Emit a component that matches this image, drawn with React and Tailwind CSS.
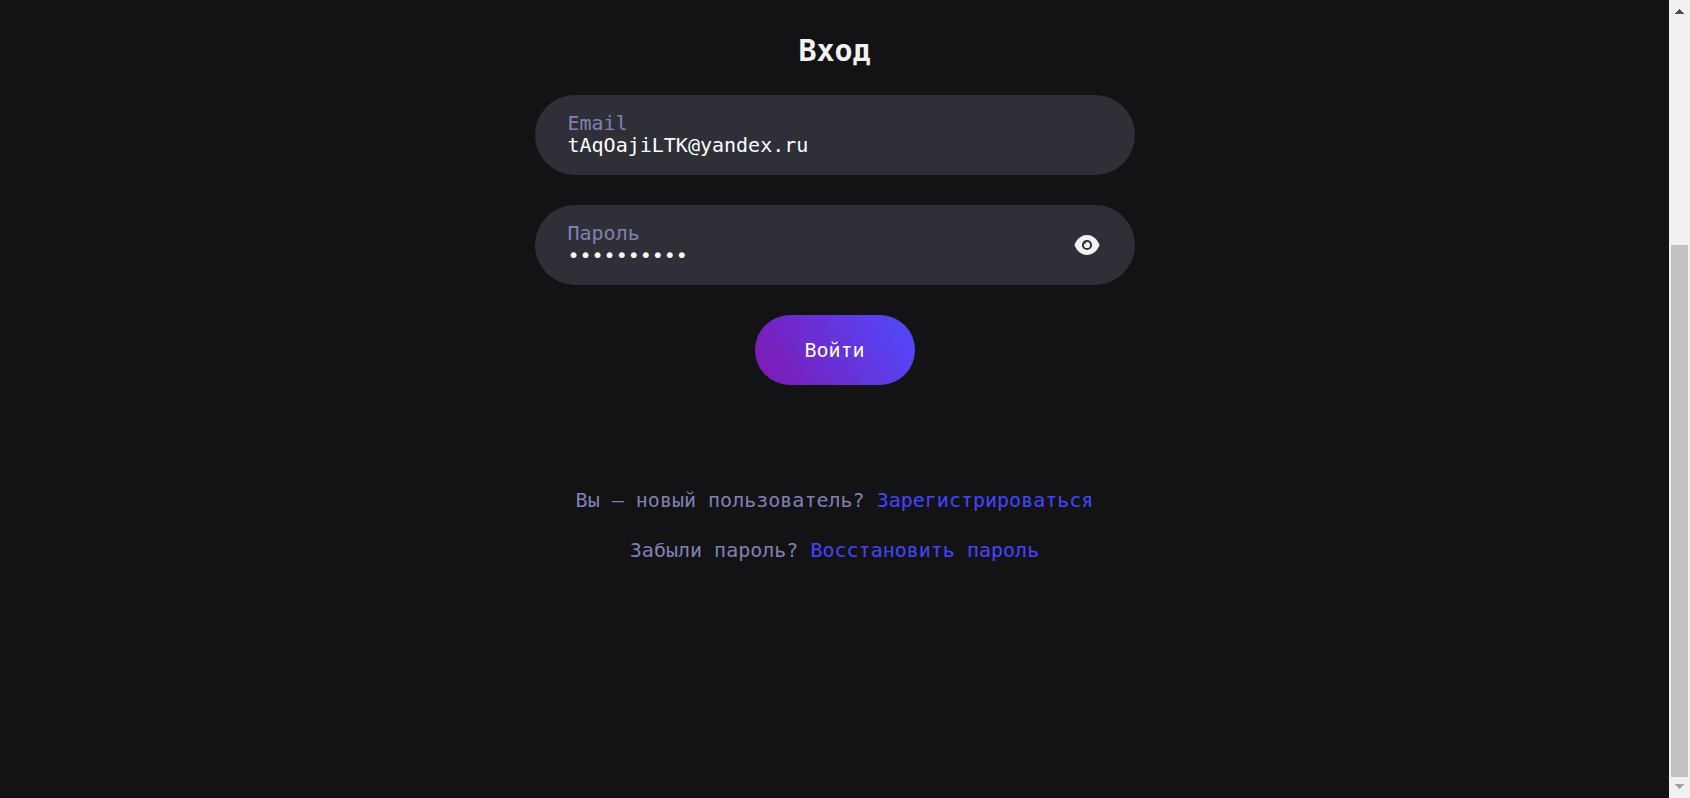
import { useState } from "react";

function Field({ id, label, children, action }) {
  return (
    <div className="flex h-20 items-center rounded-full bg-[#2f2f37] pr-[35px] pl-[33px]">
      <div className="flex min-w-0 flex-1 flex-col pb-0.5">
        <label htmlFor={id} className="leading-[22px] text-[#8181b1]">
          {label}
        </label>
        {children}
      </div>
      {action}
    </div>
  );
}

function EyeIcon() {
  return (
    <svg viewBox="0 0 26 20" className="h-5 w-[26px]" aria-hidden="true">
      <path
        fill="#f2f2f2"
        fillRule="evenodd"
        d="M13 0C7.6 0 3.4 3.4.7 9.2a1.9 1.9 0 0 0 0 1.6C3.4 16.6 7.6 20 13 20s9.6-3.4 12.300-9.200a1.900 1.900 0 0 0 0-1.600C22.600 3.400 18.400 0 13 0ZM13 4.900a5.100 5.100 0 1 1 0 10.200 5.100 5.100 0 0 1 0-10.200Z"
      />
      <circle cx="13" cy="10" r="3.1" fill="#f2f2f2" />
      <circle cx="11.2" cy="7.9" r="0.9" fill="#2f2f37" />
    </svg>
  );
}

function ScrollRail() {
  return (
    <div className="flex w-[21px] shrink-0 flex-col items-center bg-[#f1f1f1]" aria-hidden="true">
      <svg viewBox="0 0 9 5" className="mt-[9px] h-[5px] w-[9px]" shapeRendering="crispEdges">
        <path fill="#505050" d="M4 0h1v1h1v1h1v1h1v1h1v1H0V4h1V3h1V2h1V1h1z" />
      </svg>
      <div className="grow-[231]" />
      <div className="w-[17px] grow-[532] bg-[#c1c1c1]" />
      <svg viewBox="0 0 9 5" className="mt-[7px] mb-[9px] h-[5px] w-[9px]" shapeRendering="crispEdges">
        <path fill="#a3a3a3" d="M0 0h9v1H8v1H7v1H6v1H5v1H4V4H3V3H2V2H1V1H0z" />
      </svg>
    </div>
  );
}

export default function App() {
  const [email, setEmail] = useState("tAqOajiLTK@yandex.ru");
  const [password, setPassword] = useState("qwerty1234");
  const [visible, setVisible] = useState(false);

  return (
    <div className="flex min-h-screen bg-[#131315] font-['DejaVu_Sans_Mono',monospace] text-xl">
      <main className="flex flex-1 flex-col items-center px-4 pt-[31px]">
        <h1 className="text-[30px] leading-10 font-bold text-[#f2f2f2]">Вход</h1>
        <form
          className="mt-6 flex w-full max-w-[600px] flex-col gap-[30px]"
          onSubmit={(e) => e.preventDefault()}
        >
          <Field id="email" label="Email">
            <input
              id="email"
              type="email"
              value={email}
              onChange={(e) => setEmail(e.target.value)}
              className="h-[22px] w-full bg-transparent leading-[22px] text-white outline-none"
            />
          </Field>
          <Field
            id="password"
            label="Пароль"
            action={
              <button type="button" aria-label="Показать пароль" onClick={() => setVisible(!visible)}>
                <EyeIcon />
              </button>
            }
          >
            <input
              id="password"
              type={visible ? "text" : "password"}
              value={password}
              onChange={(e) => setPassword(e.target.value)}
              className="h-[22px] w-full bg-transparent leading-[22px] text-white outline-none"
            />
          </Field>
          <button
            type="submit"
            className="h-[70px] w-40 self-center rounded-full bg-[linear-gradient(60deg,#8019b0,#4f4aff)] text-white"
          >
            Войти
          </button>
        </form>
        <div className="mt-[100px] flex flex-col gap-5 text-center leading-[30px] text-[#8181b1]">
          <p>
            Вы — новый пользователь?{" "}
            <a href="#register" className="text-[#4545ff]">
              Зарегистрироваться
            </a>
          </p>
          <p>
            Забыли пароль?{" "}
            <a href="#restore" className="text-[#4545ff]">
              Восстановить пароль
            </a>
          </p>
        </div>
      </main>
      <ScrollRail />
    </div>
  );
}
